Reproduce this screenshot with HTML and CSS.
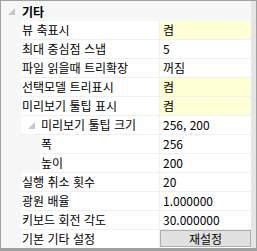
FILE: index.html
```html
<!DOCTYPE html>
<html lang="ko">
<head>
<meta charset="utf-8">
<link rel="stylesheet" href="styles.css">
</head>
<body>
<div class="pg">
  <div class="rows">
    <div class="cat">
      <span class="tri"><svg width="7" height="7" viewBox="0 0 7 7"><path d="M7 0V7H0Z" fill="#c8c8c8"/></svg></span>
      <span class="cat-name">기타</span>
    </div>
    <div class="row"><div class="gut"></div><div class="name">뷰 축표시</div><div class="val hl">켬</div></div>
    <div class="row"><div class="gut"></div><div class="name">최대 중심점 스냅</div><div class="val">5</div></div>
    <div class="row"><div class="gut"></div><div class="name">파일 읽을때 트리확장</div><div class="val">꺼짐</div></div>
    <div class="row"><div class="gut"></div><div class="name">선택모델 트리표시</div><div class="val hl">켬</div></div>
    <div class="row"><div class="gut"></div><div class="name">미리보기 툴팁 표시</div><div class="val hl">켬</div></div>
    <div class="row"><div class="gut"></div><div class="name sub"><span class="tri2"><svg width="7" height="7" viewBox="0 0 7 7"><path d="M7 0V7H0Z" fill="#c8c8c8"/></svg></span><span>미리보기 툴팁 크기</span></div><div class="val">256, 200</div></div>
    <div class="row"><div class="gut gut2"></div><div class="name child">폭</div><div class="val">256</div></div>
    <div class="row"><div class="gut gut2"></div><div class="name child">높이</div><div class="val">200</div></div>
    <div class="row"><div class="gut"></div><div class="name">실행 취소 횟수</div><div class="val">20</div></div>
    <div class="row"><div class="gut"></div><div class="name">광원 배율</div><div class="val">1.000000</div></div>
    <div class="row"><div class="gut"></div><div class="name">키보드 회전 각도</div><div class="val">30.000000</div></div>
    <div class="row"><div class="gut"></div><div class="name">기본 기타 설정</div><div class="val btncell"><div class="btn">재설정</div></div></div>
  </div>
  <div class="scroll"></div>
</div>
</body>
</html>
```
FILE: styles.css
```css
html, body {
  margin: 0;
  padding: 0;
  background: #fff;
}
.pg {
  width: 257px;
  height: 251px;
  box-sizing: border-box;
  border: 1px solid #a0a0a0;
  border-bottom-width: 3px;
  display: flex;
  font-family: "Noto Sans CJK KR", sans-serif;
  font-size: 12px;
  color: #000;
  overflow: hidden;
}
.rows {
  flex: 1;
  background: #f7f7f7;
}
.scroll {
  width: 5px;
  background: #e6e6e6;
}
.cat {
  height: 20px;
  display: flex;
  align-items: center;
  background: #f7f7f7;
}
.tri {
  width: 21px;
  display: flex;
  justify-content: center;
  padding-top: 1px;
}
.cat-name {
  font-weight: bold;
  line-height: 19px;
}
.row {
  height: 19px;
  display: flex;
}
.gut {
  width: 20px;
  flex: none;
}
.gut2 {
  width: 39px;
}
.name {
  width: 139px;
  flex: none;
  box-sizing: border-box;
  padding-left: 1px;
  background: #fff;
  border-bottom: 1px solid #f0f0f0;
  border-right: 1px solid #f0f0f0;
  line-height: 18px;
  white-space: nowrap;
  overflow: hidden;
}
.child {
  width: 120px;
}
.sub {
  display: flex;
  align-items: center;
  padding-left: 0;
}
.tri2 {
  width: 20px;
  display: flex;
  justify-content: center;
}
.val {
  flex: 1;
  box-sizing: border-box;
  padding-left: 3px;
  background: #fff;
  border-bottom: 1px solid #f0f0f0;
  line-height: 18px;
  white-space: nowrap;
}
.hl {
  background: #ffffd6;
}
.btncell {
  padding: 0;
  border-bottom: none;
  background: #fff;
}
.btn {
  height: 17px;
  box-sizing: border-box;
  border: 1px solid #adadad;
  background: #e1e1e1;
  text-align: center;
  line-height: 15px;
}
```
